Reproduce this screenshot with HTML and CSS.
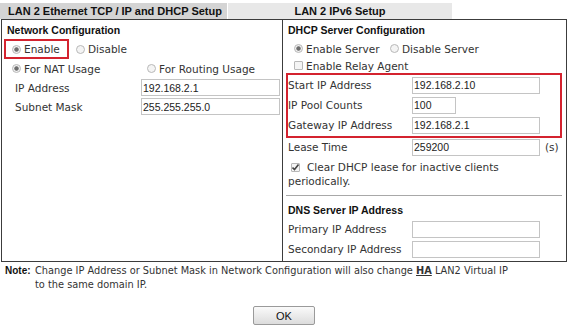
FILE: index.html
```html
<!DOCTYPE html>
<html lang="en">
<head>
    <meta charset="UTF-8">
    <meta name="viewport" content="width=device-width, initial-scale=1.0">
    <title>LAN 2 Setup</title>
    <link rel="stylesheet" href="styles.css">
</head>
<body>
    <div class="page">
        <div class="tabs">
            <div class="tab tab-active">LAN 2 Ethernet TCP / IP and DHCP Setup</div>
            <div class="tab">LAN 2 IPv6 Setup</div>
        </div>
        <div class="panel">
            <div class="col col-left">
                <div class="heading">Network Configuration</div>
                <div class="row row-enable">
                    <label class="opt opt-marked"><input type="radio" name="lan" checked>Enable</label>
                    <label class="opt"><input type="radio" name="lan">Disable</label>
                </div>
                <div class="row row-usage">
                    <label class="opt opt-nat"><input type="radio" name="usage" checked>For NAT Usage</label>
                    <label class="opt"><input type="radio" name="usage">For Routing Usage</label>
                </div>
                <div class="field field-left">
                    <label for="ip">IP Address</label>
                    <input type="text" id="ip" value="192.168.2.1">
                </div>
                <div class="field field-left">
                    <label for="mask">Subnet Mask</label>
                    <input type="text" id="mask" value="255.255.255.0">
                </div>
            </div>
            <div class="col col-right">
                <div class="heading">DHCP Server Configuration</div>
                <div class="row row-server">
                    <label class="opt opt-server"><input type="radio" name="dhcp" checked>Enable Server</label>
                    <label class="opt"><input type="radio" name="dhcp">Disable Server</label>
                </div>
                <div class="row row-relay">
                    <label class="opt"><input type="checkbox">Enable Relay Agent</label>
                </div>
                <div class="marked-group">
                    <div class="field">
                        <label for="start">Start IP Address</label>
                        <input type="text" id="start" value="192.168.2.10">
                    </div>
                    <div class="field">
                        <label for="pool">IP Pool Counts</label>
                        <input type="text" id="pool" class="short" value="100">
                    </div>
                    <div class="field">
                        <label for="gw">Gateway IP Address</label>
                        <input type="text" id="gw" value="192.168.2.1">
                    </div>
                </div>
                <div class="field field-lease">
                    <label for="lease">Lease Time</label>
                    <input type="text" id="lease" value="259200">
                    <span class="unit">(s)</span>
                </div>
                <p class="clear-lease"><input type="checkbox" checked>Clear DHCP lease for inactive clients periodically.</p>
                <hr>
                <div class="heading heading-dns">DNS Server IP Address</div>
                <div class="field">
                    <label for="dns1">Primary IP Address</label>
                    <input type="text" id="dns1">
                </div>
                <div class="field">
                    <label for="dns2">Secondary IP Address</label>
                    <input type="text" id="dns2">
                </div>
            </div>
        </div>
        <div class="note">
            <div class="note-title">Note:</div>
            <div class="note-text">
                <div>Change IP Address or Subnet Mask in Network Configuration will also change <u class="ha">HA</u> LAN2 Virtual IP</div>
                <div>to the same domain IP.</div>
            </div>
        </div>
        <div class="actions">
            <button type="button">OK</button>
        </div>
    </div>
</body>
</html>
```

FILE: styles.css
```css
body {
    margin: 0;
    padding: 0;
    background-color: #fff;
    font-family: "DejaVu Sans", Verdana, sans-serif;
    font-size: 10.5px;
    color: #333;
}
.page {
    width: 566px;
    padding: 3px 0 0 1px;
}
.tabs {
    display: flex;
    height: 16px;
}
.tab {
    width: 224px;
    margin-left: 1px;
    background-color: #e8e8e8;
    font-family: "Liberation Sans", Arial, sans-serif;
    font-weight: bold;
    font-size: 11px;
    line-height: 16px;
    text-align: center;
    color: #111;
}
.tab-active {
    width: 227px;
    margin-left: -1px;
    padding-left: 3px;
    box-sizing: border-box;
    background-color: #d4d4d4;
}
.panel {
    display: flex;
    border: 1px solid #3c3c3c;
    height: 241px;
}
.col {
    box-sizing: border-box;
}
.col-left {
    width: 281px;
    padding-left: 2px;
    border-right: 1px solid #3c3c3c;
}
.col-left .heading {
    padding-left: 3px;
}
.col-right {
    flex: 1;
    padding-left: 5px;
}
.heading {
    font-family: "Liberation Sans", Arial, sans-serif;
    font-weight: bold;
    font-size: 10.5px;
    color: #111;
    height: 19px;
    line-height: 20px;
}
.row {
    display: flex;
    align-items: center;
}
.opt {
    display: flex;
    align-items: center;
}
input[type="radio"], input[type="checkbox"] {
    appearance: none;
    margin: 0 3px 0 0;
    width: 9px;
    height: 9px;
    border: 1px solid #b8b8b8;
    background-color: #f4f4f4;
    box-sizing: border-box;
}
input[type="radio"] {
    border-radius: 50%;
}
input[type="radio"]:checked {
    background: radial-gradient(circle, #6e6e6e 0 1.8px, #f0f0f0 2.6px);
}
input[type="checkbox"] {
    border-radius: 1px;
}
input[type="checkbox"]:checked {
    background: #f4f4f4 url("data:image/svg+xml,%3Csvg xmlns='http://www.w3.org/2000/svg' viewBox='0 0 9 9'%3E%3Cpath d='M1.5 4.5l2 2 4-5' fill='none' stroke='%23444' stroke-width='1.6'/%3E%3C/svg%3E") center/9px 9px no-repeat;
}
.row-enable {
    height: 20px;
}
.opt-marked {
    box-sizing: border-box;
    width: 65px;
    height: 20px;
    padding-left: 6px;
    border: 2px solid #d4232f;
    margin-right: 7px;
}
.row-usage {
    height: 19px;
    padding-left: 8px;
}
.opt-nat {
    width: 135px;
}
.field {
    display: flex;
    align-items: center;
    height: 20px;
}
.field label {
    width: 124px;
}
.field input[type="text"] {
    box-sizing: border-box;
    width: 128px;
    height: 17px;
    margin: 0;
    padding: 0 1px;
    border: 1px solid #c4c4c4;
    font-family: "Liberation Sans", Arial, sans-serif;
    font-size: 10.5px;
    color: #222;
}
.field-left {
    height: 19px;
    padding-left: 11px;
}
.field-left:first-of-type {
    height: 18px;
}
.field-left label {
    width: 126px;
}
.field-left input[type="text"] {
    width: 139px;
}
.field input.short {
    width: 44px;
}
.row-server {
    height: 19px;
    padding-left: 6px;
}
.opt-server {
    width: 96px;
}
.row-relay {
    height: 15px;
    padding-left: 6px;
}
.marked-group {
    width: 276px;
    box-sizing: border-box;
    margin: 0 0 0 -2px;
    padding: 0 0 1px 0;
    border: 2px solid #d4232f;
}
.field-lease {
    height: 18px;
}
.unit {
    margin-left: 5px;
}
.clear-lease {
    margin: 4px 0 0 0;
    width: 250px;
    line-height: 14px;
}
.clear-lease input[type="checkbox"] {
    margin: 0 7px 0 3px;
    vertical-align: -1px;
}
hr {
    margin: 7px 0 0 -2px;
    width: 276px;
    border: 0;
    border-top: 1px solid #a8a8a8;
}
.heading-dns {
    margin-top: 4px;
}
.note {
    display: flex;
    padding-left: 4px;
    margin-top: 2px;
    line-height: 14px;
    font-size: 9.8px;
}
.note-title {
    font-family: "Liberation Sans", Arial, sans-serif;
    font-weight: bold;
    font-size: 10px;
    color: #111;
    width: 30px;
    flex-shrink: 0;
}
.note-text {
    width: 482px;
}
.ha {
    font-weight: bold;
}
.actions {
    display: flex;
    justify-content: center;
    margin-top: 14px;
}
button {
    width: 62px;
    height: 19px;
    border: 1px solid #9a9a9a;
    border-radius: 2px;
    background: linear-gradient(#fafafa, #dcdcdc);
    font-family: "Liberation Sans", Arial, sans-serif;
    font-size: 11px;
    color: #111;
}
```
